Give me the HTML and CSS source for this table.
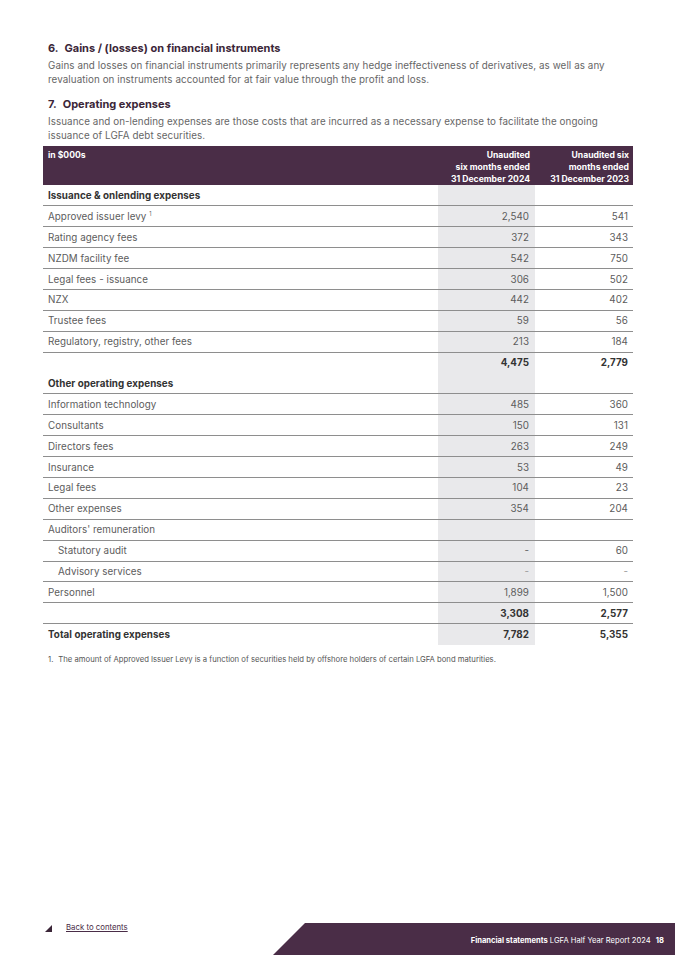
FILE: index.html
```html
<!DOCTYPE html>
<html>
<head>
<meta charset="utf-8">
<link rel="stylesheet" href="styles.css">
</head>
<body>
<div class="page">
  <main class="content">
    <h2 class="heading"><span class="num">6.</span>Gains / (losses) on financial instruments</h2>
    <p class="para">Gains and losses on financial instruments primarily represents any hedge ineffectiveness of derivatives, as well as any revaluation on instruments accounted for at fair value through the profit and loss.</p>
    <h2 class="heading h7"><span class="num">7.</span>Operating expenses</h2>
    <p class="para">Issuance and on-lending expenses are those costs that are incurred as a necessary expense to facilitate the ongoing issuance of LGFA debt securities.</p>

    <table class="fin">
      <colgroup><col class="c-label"><col class="c-cur"><col class="c-prev"></colgroup>
      <thead>
        <tr>
          <th class="lbl">in $000s</th>
          <th class="val">Unaudited<br>six months ended<br>31 December 2024</th>
          <th class="val">Unaudited six<br>months ended<br>31 December 2023</th>
        </tr>
      </thead>
      <tbody>
        <tr class="sec line"><td>Issuance &amp; onlending expenses</td><td class="cur"></td><td></td></tr>
        <tr class="line"><td>Approved issuer levy <sup>1</sup></td><td class="cur">2,540</td><td class="v">541</td></tr>
        <tr class="line"><td>Rating agency fees</td><td class="cur">372</td><td class="v">343</td></tr>
        <tr class="line"><td>NZDM facility fee</td><td class="cur">542</td><td class="v">750</td></tr>
        <tr class="line"><td>Legal fees - issuance</td><td class="cur">306</td><td class="v">502</td></tr>
        <tr class="line"><td>NZX</td><td class="cur">442</td><td class="v">402</td></tr>
        <tr class="line"><td>Trustee fees</td><td class="cur">59</td><td class="v">56</td></tr>
        <tr class="line"><td>Regulatory, registry, other fees</td><td class="cur">213</td><td class="v">184</td></tr>
        <tr class="sub"><td></td><td class="cur">4,475</td><td class="v">2,779</td></tr>
        <tr class="sec line"><td>Other operating expenses</td><td class="cur"></td><td></td></tr>
        <tr class="line"><td>Information technology</td><td class="cur">485</td><td class="v">360</td></tr>
        <tr class="line"><td>Consultants</td><td class="cur">150</td><td class="v">131</td></tr>
        <tr class="line"><td>Directors fees</td><td class="cur">263</td><td class="v">249</td></tr>
        <tr class="line"><td>Insurance</td><td class="cur">53</td><td class="v">49</td></tr>
        <tr class="line"><td>Legal fees</td><td class="cur">104</td><td class="v">23</td></tr>
        <tr class="line"><td>Other expenses</td><td class="cur">354</td><td class="v">204</td></tr>
        <tr class="line"><td>Auditors' remuneration</td><td class="cur"></td><td></td></tr>
        <tr class="line"><td class="ind">Statutory audit</td><td class="cur">-</td><td class="v">60</td></tr>
        <tr class="line"><td class="ind">Advisory services</td><td class="cur dash">-</td><td class="v dash">-</td></tr>
        <tr class="line"><td>Personnel</td><td class="cur">1,899</td><td class="v">1,500</td></tr>
        <tr class="sub line"><td></td><td class="cur">3,308</td><td class="v">2,577</td></tr>
        <tr class="sub total"><td>Total operating expenses</td><td class="cur">7,782</td><td class="v">5,355</td></tr>
      </tbody>
    </table>

    <p class="note"><span class="nnum">1.</span>The amount of Approved Issuer Levy is a function of securities held by offshore holders of certain LGFA bond maturities.</p>
  </main>

  <footer class="foot">
    <a class="back" href="#"><span class="tri"></span><span class="backtxt">Back to contents</span></a>
    <div class="band"><span class="bandtxt"><b>Financial statements</b> LGFA Half Year Report 2024 <b class="pg">18</b></span></div>
  </footer>
</div>
</body>
</html>
```
FILE: styles.css
```css
* { box-sizing: border-box; }
html, body { margin: 0; padding: 0; background: #fff; }
body { font-family: Inter, "Noto Sans", sans-serif; color: #5a5a5a; }

.page {
  width: 675px;
  height: 955px;
  display: flex;
  flex-direction: column;
}
.content {
  padding: 41px 42px 0 43px;
  flex: 1;
}
.heading {
  margin: 0 0 0 5px;
  font-size: 11px;
  line-height: 14px;
  font-weight: 700;
  color: #3b2638;
}
.heading .num { margin-right: 6px; }
.h7 { margin-top: 11px; }
.para {
  margin: 4px 0 0 5px;
  font-size: 9.8px;
  letter-spacing: 0.08px;
  line-height: 13.5px;
  color: #666;
}

.fin {
  margin-top: 4px;
  width: 590px;
  border-collapse: collapse;
  font-size: 9.8px;
  letter-spacing: 0.05px;
}
.c-label { width: 395px; }
.c-cur { width: 97px; }
.c-prev { width: 98px; }
.fin thead tr { background: #4a2d47; color: #fff; }
.fin th {
  height: 39px;
  vertical-align: top;
  padding: 3px 5px 0 5px;
  font-size: 8.6px;
  letter-spacing: 0;
  line-height: 12px;
  font-weight: 700;
}
.fin th.lbl { text-align: left; }
.fin th.val { text-align: right; }
.fin th.val:last-child { padding-right: 4px; }
.fin td {
  height: 20.9px;
  padding: 0 5px;
  vertical-align: middle;
  color: #5c5c5c;
  white-space: nowrap;
}
.fin td.cur, .fin td.v { text-align: right; padding-right: 6px; }
.fin td.v { padding-right: 5px; }
.fin td.cur { background: #e9e9eb; }
.fin tr.line td { border-bottom: 1px solid #8e8e8e; }
.fin tr.sec td { font-weight: 700; color: #333; }
.fin tr.sub td { font-weight: 700; color: #333; }
.fin td.ind { padding-left: 15px; }
.fin td.dash { color: #999; }
.fin sup { font-size: 5.5px; vertical-align: 4px; }

.note {
  margin: 10px 0 0 5px;
  font-size: 7.7px;
  color: #555;
}
.nnum { margin-right: 5px; }

.foot {
  height: 32px;
  display: flex;
  align-items: flex-start;
  justify-content: space-between;
}
.back {
  display: flex;
  align-items: center;
  margin: 0 0 0 45px;
  text-decoration: none;
  color: #4a2d47;
  font-size: 7.8px;
}
.tri {
  width: 7px;
  height: 7px;
  margin-top: 2px;
  background: #3b2638;
  clip-path: polygon(100% 0, 100% 100%, 0 100%);
}
.backtxt {
  margin-left: 14px;
  text-decoration: underline;
  line-height: 9px;
}
.band {
  width: 402px;
  height: 32px;
  background: #4a2d47;
  clip-path: polygon(32px 0, 100% 0, 100% 100%, 0 100%);
  display: flex;
  align-items: center;
  justify-content: flex-end;
  padding: 2px 11px 0 0;
}
.bandtxt { color: #fff; font-size: 7.6px; }
.bandtxt .pg { margin-left: 3px; }
```
